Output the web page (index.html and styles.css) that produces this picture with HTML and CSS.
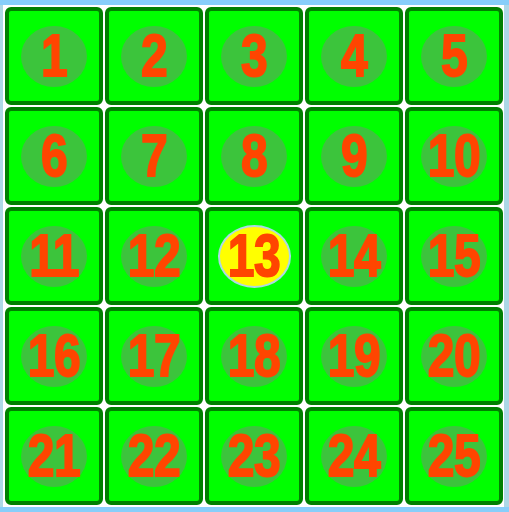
FILE: index.html
```html
<!DOCTYPE html>
<html>
<head>
<meta charset="utf-8">
<link rel="stylesheet" href="styles.css">
</head>
<body>
<div class="top-bar"></div>
<div class="middle">
  <div class="panel">
    <div class="grid">
      <div class="cell"><div class="dot"><span class="num">1</span></div></div>
      <div class="cell"><div class="dot"><span class="num">2</span></div></div>
      <div class="cell"><div class="dot"><span class="num">3</span></div></div>
      <div class="cell"><div class="dot"><span class="num">4</span></div></div>
      <div class="cell"><div class="dot"><span class="num">5</span></div></div>
      <div class="cell"><div class="dot"><span class="num">6</span></div></div>
      <div class="cell"><div class="dot"><span class="num">7</span></div></div>
      <div class="cell"><div class="dot"><span class="num">8</span></div></div>
      <div class="cell"><div class="dot"><span class="num">9</span></div></div>
      <div class="cell"><div class="dot"><span class="num">10</span></div></div>
      <div class="cell"><div class="dot"><span class="num">11</span></div></div>
      <div class="cell"><div class="dot"><span class="num">12</span></div></div>
      <div class="cell"><div class="dot active"><span class="num">13</span></div></div>
      <div class="cell"><div class="dot"><span class="num">14</span></div></div>
      <div class="cell"><div class="dot"><span class="num">15</span></div></div>
      <div class="cell"><div class="dot"><span class="num">16</span></div></div>
      <div class="cell"><div class="dot"><span class="num">17</span></div></div>
      <div class="cell"><div class="dot"><span class="num">18</span></div></div>
      <div class="cell"><div class="dot"><span class="num">19</span></div></div>
      <div class="cell"><div class="dot"><span class="num">20</span></div></div>
      <div class="cell"><div class="dot"><span class="num">21</span></div></div>
      <div class="cell"><div class="dot"><span class="num">22</span></div></div>
      <div class="cell"><div class="dot"><span class="num">23</span></div></div>
      <div class="cell"><div class="dot"><span class="num">24</span></div></div>
      <div class="cell"><div class="dot"><span class="num">25</span></div></div>
    </div>
  </div>
</div>
<div class="bottom-bar"></div>
</body>
</html>
```
FILE: styles.css
```css
html, body {
  margin: 0;
  padding: 0;
}
body {
  width: 509px;
  height: 512px;
  background: #add8e6;
  overflow: hidden;
}
.top-bar {
  height: 5px;
  background: #87cefa;
}
.bottom-bar {
  height: 5px;
  background: #87cefa;
}
.middle {
  display: flex;
  padding-left: 3px;
}
.panel {
  width: 501px;
  height: 502px;
  background: #ffffff;
  box-sizing: border-box;
  padding: 2px 1px 2px 2px;
}
.grid {
  display: grid;
  grid-template-columns: repeat(5, 98px);
  grid-template-rows: repeat(5, 98px);
  gap: 2px;
}
.cell {
  box-sizing: border-box;
  border: 4px solid #008000;
  border-radius: 6px;
  background: #00ff00;
  display: flex;
  align-items: center;
  justify-content: center;
}
.dot {
  width: 66px;
  height: 61px;
  border-radius: 50%;
  background: #3cc43c;
  display: flex;
  align-items: center;
  justify-content: center;
  box-sizing: border-box;
}
.dot.active {
  width: 73px;
  height: 63px;
  background: #ffff00;
  border: 2px solid #add8e6;
}
.num {
  font-family: "Liberation Sans Narrow", "Liberation Sans", sans-serif;
  font-weight: bold;
  font-size: 48px;
  line-height: 1;
  color: #ff4500;
  -webkit-text-stroke: 1.5px #ff4500;
  letter-spacing: -0.5px;
  transform: scaleY(1.25);
  display: block;
}
```
